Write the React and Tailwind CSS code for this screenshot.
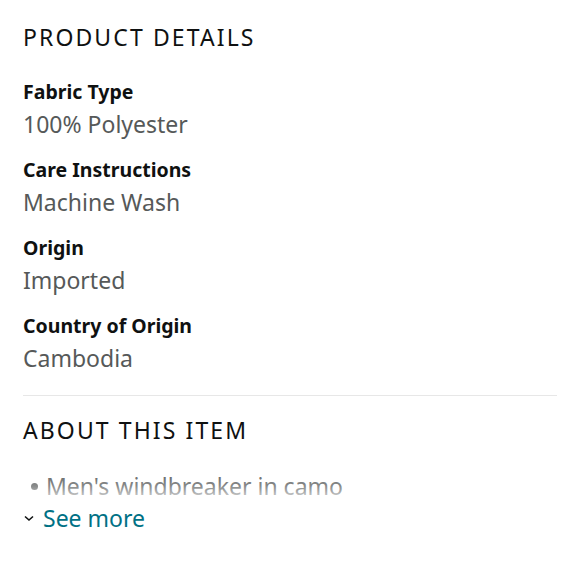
import React from "react";

const details = [
  { label: "Fabric Type", value: "100% Polyester" },
  { label: "Care Instructions", value: "Machine Wash" },
  { label: "Origin", value: "Imported" },
  { label: "Country of Origin", value: "Cambodia" },
];

const App = () => {
  return (
    <div className="w-[580px] h-[580px] bg-white px-[23px] pt-[20px] font-['Noto_Sans',sans-serif]">
      {/* Product details */}
      <h2 className="text-[23px] leading-[34px] tracking-[2.1px] text-[#0f1111] font-normal">
        PRODUCT DETAILS
      </h2>
      <div className="mt-[23px] flex flex-col gap-[14px]">
        {details.map((item) => (
          <div key={item.label} className="flex flex-col">
            <span className="text-[19.5px] leading-[30px] font-bold text-[#0f1111]">
              {item.label}
            </span>
            <span className="text-[23px] leading-[34px] text-[#565959]">
              {item.value}
            </span>
          </div>
        ))}
      </div>

      <div className="mt-[20px] border-t border-[#e7e7e7]" />

      {/* About this item */}
      <h2 className="mt-[17px] text-[23px] leading-[34px] tracking-[2.1px] text-[#0f1111] font-normal">
        ABOUT THIS ITEM
      </h2>
      <div className="relative mt-[22px] h-[34px] overflow-hidden">
        <div className="flex items-center gap-[8px] pl-[8px]">
          <span className="w-[7px] h-[7px] rounded-full bg-[#565959]" />
          <span className="text-[23px] leading-[34px] text-[#565959]">
            Men's windbreaker in camo
          </span>
        </div>
        <div className="absolute inset-0 bg-gradient-to-b from-white/0 via-white/30 to-white/90" />
      </div>
      <button className="-mt-[1px] flex items-center gap-[8px] text-[#007185] text-[23px] leading-[32px]">
        <svg width="12" height="12" viewBox="0 0 12 12">
          <path d="M2 4.5 L6 8 L10 4.5" fill="none" stroke="#0f1111" strokeWidth="1.6" />
        </svg>
        See more
      </button>
    </div>
  );
};

export default App;
